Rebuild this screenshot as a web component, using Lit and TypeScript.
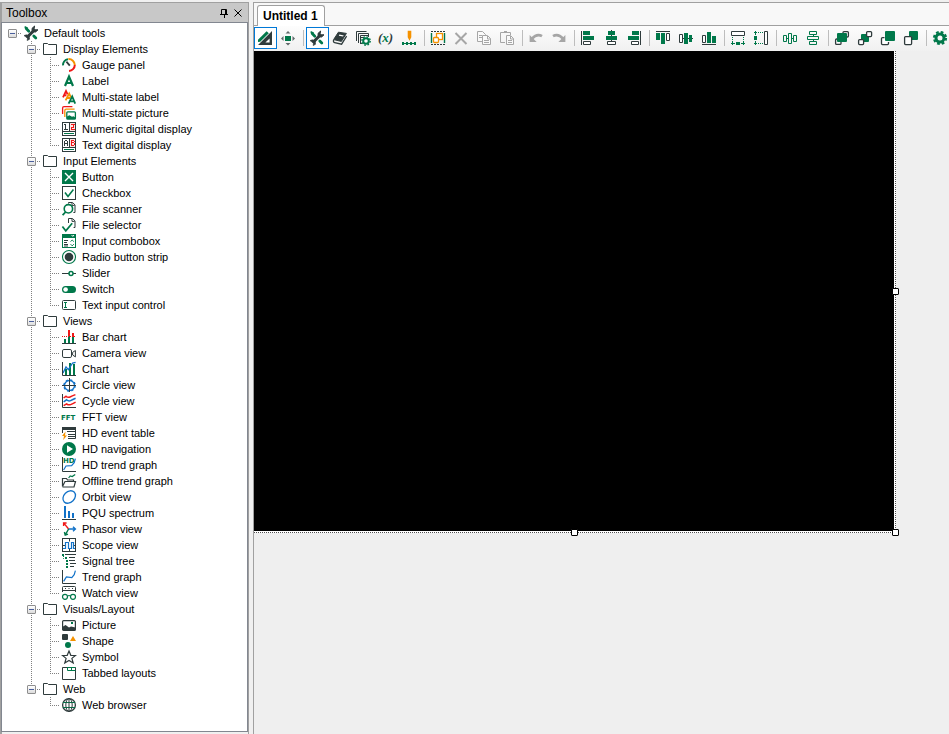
import { LitElement, html, css, svg, nothing } from "lit";
import type { SVGTemplateResult } from "lit";
import { customElement, property, state } from "lit/decorators.js";
import { classMap } from "lit/directives/class-map.js";

const G = "#00784a";
const D = "#2f3b3c";
const R = "#f01818";
const O = "#f59200";
const B = "#1272c8";
const A = "#a6a6a6";

/* All icons are drawn on a 16 x 16 grid. */
const icons: Record<string, SVGTemplateResult> = {
  tools: svg`<path d="M3.2 3.6L5.8 6.2M10.8 11l2 2" stroke="${G}" stroke-width="2.8" stroke-linecap="round"/><path d="M1.6 1.8l3 1.4" stroke="${G}" stroke-width="1.6"/>
    <path d="M4 12.4L11.4 5" stroke="${D}" stroke-width="3"/><path d="M11.6 1L9 3.4L9.2 6.6L12.6 7L15 4.8L12.4 4.8L11.2 3.6z" fill="${D}" stroke="${D}" stroke-linejoin="round"/>
    <path d="M1 10.6l2.4-.8l2.800 1.400l.4 3l-2.400 1.400l.2-2.200l-1.400-1.400z" fill="${D}" stroke="${D}" stroke-width=".6"/>`,
  folder: svg`<path d="M1.5 13.5v-11h4l1 1h8v10z" fill="#fff" stroke="${D}" stroke-linejoin="round"/>`,
  gauge: svg`<g fill="none" stroke-width="2"><path d="M2 8.4A6 6 0 0 1 7 2.2" stroke="${G}"/><path d="M7.4 2.1A6 6 0 0 1 13.8 8" stroke="${O}"/><path d="M13.8 8A6 6 0 0 1 8 13.9" stroke="${R}"/></g><path d="M5.4 4.6l3.4 4" stroke="${D}" stroke-width="1.8"/>`,
  label: svg`<path d="M4 13L8 3.5L12 13M5.4 10h5.2" fill="none" stroke="${G}" stroke-width="2.2"/>`,
  multilabel: svg`<g fill="none"><path d="M2 8.4L5 2l1.6 3.4M2.8 6.4h2.6" stroke="${R}" stroke-width="1.8"/><path d="M4.6 11.4L8.2 4.6l1.8 4M6 9h3" stroke="${O}" stroke-width="1.8"/><path d="M7.6 14.6L11.2 7.4l3 7.2M8.8 12.4h4.6" stroke="${G}" stroke-width="1.8"/></g>`,
  multipicture: svg`<g fill="none" stroke-width="1.3"><path d="M1.600 9V3q0-1.400 1.400-1.400h8.400" stroke="${R}"/><path d="M3.800 12V5.600q0-1.400 1.400-1.400h8.400" stroke="${O}"/><rect x="5.800" y="6.800" width="8.600" height="7.400" rx="1" fill="#fff" stroke="${G}"/></g><path d="M6 14v-2.400l2.400-1.400l2.600 1.600l1.400-.6l2 1.200V14z" fill="${G}"/>`,
  numeric: svg`<g shape-rendering="crispEdges"><rect x="1.5" y="1.5" width="13" height="13" fill="#fff" stroke="${D}"/><path d="M9 2h5v8H9z" fill="#ffe4e4"/><path d="M8.5 1v10M1 10.5h14" stroke="${D}"/><path d="M3 3.5h2M4.5 3v6M3 8.5h4" stroke="${D}"/><path d="M10 3.5h3.500M12.500 3v3M10 6h3M10.500 6v3M10 8.500h3.500" fill="none" stroke="${R}"/><path d="M3 12.5h10" stroke="${G}"/></g>`,
  textdisplay: svg`<g shape-rendering="crispEdges"><rect x="1.5" y="1.5" width="13" height="13" fill="#fff" stroke="${D}"/><path d="M9 2h5v8H9z" fill="#ffe4e4"/><path d="M8.5 1v10M1 10.5h14" stroke="${D}"/><path d="M3.5 9V4M6.500 9V4M4 3.500h2M3 6.5h4" fill="none" stroke="${D}"/><path d="M10.5 3v6M10 3.500h3M10 5.500h3M10 8.500h3M13.500 4v1M13.500 6v2" fill="none" stroke="${R}"/><path d="M3 12.5h10" stroke="${G}"/></g>`,
  button: svg`<rect x="1" y="1" width="14" height="14" fill="${G}"/><path d="M4 4l8 8M12 4l-8 8" stroke="#fff" stroke-width="1.4"/>`,
  checkbox: svg`<rect x="1.5" y="1.5" width="13" height="13" fill="#fff" stroke="${D}"/><path d="M4 7.6l3 3.8l5.4-6.8" fill="none" stroke="${G}" stroke-width="1.6"/>`,
  scanner: svg`<path d="M7.5 2.6V1.5h4l2.5 2.4v7.6h-1.6M11 1.8v2.6h2.6" fill="none" stroke="${D}"/><circle cx="7.4" cy="7.8" r="4.2" fill="none" stroke="${G}" stroke-width="1.6"/><path d="M4.6 11l-3 3.2" stroke="${G}" stroke-width="1.8"/>`,
  selector: svg`<path d="M7.5 6V1.5h4l2.5 2.4v6.6h-1.4M11 1.8v2.6h2.6" fill="none" stroke="${D}"/><path d="M1.4 9.4l3.4 4.4l6.4-7.6" fill="none" stroke="${G}" stroke-width="1.7"/>`,
  combobox: svg`<rect x="1.5" y="1.5" width="13" height="13" fill="#fff" stroke="${G}"/><path d="M1 1h14v4H1z" fill="${G}"/><path d="M10.6 2l1.2 1.4L13 2" fill="none" stroke="#fff"/><path d="M3 7.5h4M3 9.500h3M3 11.500h4M3 13h4" stroke="${D}"/><path d="M9.6 8.6l1.6-1.6l1.6 1.6M9.6 11.2l1.6 1.6l1.6-1.6" fill="none" stroke="${G}"/>`,
  radio: svg`<circle cx="8" cy="8" r="6.5" fill="#fff" stroke="${G}" stroke-width="1.1"/><circle cx="8" cy="8" r="4.3" fill="${D}"/>`,
  slider: svg`<path d="M1 8.5h7M12 8.5h3" stroke="${D}"/><circle cx="10" cy="8.5" r="2" fill="#fff" stroke="${G}" stroke-width="1.5"/>`,
  switch: svg`<rect x="1" y="5" width="14" height="7" rx="3.5" fill="${G}"/><circle cx="4.6" cy="8.5" r="2.3" fill="#fff"/>`,
  textinput: svg`<rect x="1.5" y="3.5" width="13" height="9" rx="1" fill="#fff" stroke="${D}"/><path d="M3 5.5h3M4.5 5v6M3 10.5h3" stroke="${G}"/>`,
  barchart: svg`<path d="M3 10h2v4H3zM7 6h2v8H7zM11 8h2v6h-2z" fill="${G}"/><path d="M7 1h2v6H7zM11 4h2v4h-2z" fill="${R}"/><path d="M1 7.500h14" stroke="${R}" stroke-dasharray="1 1"/><path d="M1 14.500h14" stroke="${D}"/>`,
  camera: svg`<rect x="1.500" y="4.500" width="9" height="8" rx="1.400" fill="#fff" stroke="${D}"/><path d="M11.600 7.400l2.800-1.900v6.400l-2.800-1.900z" fill="#fff" stroke="${D}"/>`,
  chart: svg`<path d="M8 2h2v12H8zM12 3h2v11h-2zM4 8h2v6H4z" fill="${G}"/><path d="M2 12L5 6l2.400 2.600L11.600 2l3-.6" fill="none" stroke="${B}" stroke-width="1.300"/><path d="M1.500 1v13.500H15" fill="none" stroke="${D}"/>`,
  circle: svg`<circle cx="8.500" cy="8.500" r="5" fill="none" stroke="${B}" stroke-width="1.300"/><circle cx="8.500" cy="8.500" r="5.600" fill="none" stroke="${B}" stroke-width="1.400" stroke-dasharray="2.200 2.200"/><path d="M8.500 1v14M1 8.500h14" stroke="${D}"/>`,
  cycle: svg`<g fill="none" stroke-width="1.500"><path d="M2.600 5l2.400-1.800q2 1.800 4 .8t5.400-2.400M2.600 12.600l3-1.800q2 1.600 4 .8t5-2.400" stroke="${R}"/><path d="M2.600 8.800l3-2q2 1.800 4 .8t5-2.400" stroke="${B}"/></g><path d="M1.500 1v13.500H15" fill="none" stroke="${D}"/>`,
  fft: svg`<text x="0" y="11" font-family="DejaVu Sans, sans-serif" font-weight="bold" font-size="7" fill="${G}">FFT</text>`,
  eventtable: svg`<path d="M1.500 8V2.500h13v11H7M6 6.500h8M7 9.500h7M7 11.500h7" fill="none" stroke="${D}"/><path d="M1 2h14v3H1z" fill="${D}"/><path d="M4.600 6.600L1 11h2l-.8 4L6 10.400H4z" fill="${O}"/>`,
  nav: svg`<circle cx="8" cy="8" r="7" fill="${G}"/><path d="M6 4.200v7.600L12 8z" fill="#fff"/>`,
  hdtrend: svg`<path d="M1.500 0v14.500H15" fill="none" stroke="${D}"/><path d="M2.600 13L5 9l5.600-.4l2.600-3l1.200-4" fill="none" stroke="${B}" stroke-width="1.200"/><text x="2" y="6" font-family="DejaVu Sans, sans-serif" font-weight="bold" font-size="7" fill="${G}">HD</text>`,
  offline: svg`<path d="M1.500 13.500V5.500h4l1 1.500h6v1.500M1.500 13.500L4 8.500h10.500l-1.500 5.500H1.500" fill="none" stroke="${D}" stroke-width="1.200"/><path d="M7.600 5l1.600-2l2 .6l3-2.200" fill="none" stroke="${G}" stroke-width="1.200"/>`,
  orbit: svg`<ellipse cx="8.200" cy="8" rx="7" ry="5.400" transform="rotate(-45 8.200 8)" fill="none" stroke="${B}" stroke-width="1.300"/>`,
  pqu: svg`<path d="M3 1h2v12H3zM7 6h2v7H7zM11 8h2v5h-2z" fill="${B}"/><path d="M1 14.500h14" stroke="${D}"/>`,
  phasor: svg`<g fill="none" stroke-width="1.400"><path d="M7.600 8L3 2.400M2.600 5V2h3" stroke="${R}"/><path d="M7.600 8h6M12 5.800L14.400 8L12 10.200" stroke="${B}"/><path d="M7.600 8l-3.200 5.600M3.400 11l.8 3.200l2.800-1" stroke="${G}"/></g>`,
  scope: svg`<rect x="1.500" y="1.500" width="13" height="13" fill="#fff" stroke="${D}"/><path d="M8.500 1.500v3M8.500 12v3M2 8.500h2M12 8.500h2" stroke="${D}"/><path d="M2 11.500h2.500v-6h3v6h3v-6h2v6h1.500" fill="none" stroke="${B}" stroke-width="1.200"/>`,
  signaltree: svg`<path d="M1 1h2v2H1zM4 4h2v2H4zM5 7h2v2H5zM5 10h2v2H5zM5 13h2v2H5z" fill="${G}"/><path d="M4 1.500h11M8 4.500h6M8 7.500h6M9 10.500h6M9 13.500h4" stroke="${D}"/><path d="M2.500 3v2.500H4" fill="none" stroke="${G}" stroke-dasharray="1 1"/>`,
  trend: svg`<path d="M1.500 1v13.500H15" fill="none" stroke="${D}"/><path d="M2.600 12.400L5.400 8l5.400.6l2.400-3l1.200-4" fill="none" stroke="${B}" stroke-width="1.200"/>`,
  watch: svg`<path d="M1.500 7V2.500q0-1 1-1h11q1 0 1 1V7M1 5.500h14M4 3.500h1M7.500 3.500h1M11 3.500h1" fill="none" stroke="${D}"/><circle cx="4" cy="11.800" r="2.500" fill="none" stroke="${G}" stroke-width="1.200"/><circle cx="12" cy="11.800" r="2.500" fill="none" stroke="${G}" stroke-width="1.200"/><path d="M6.500 11q1.500-1 3 0" fill="none" stroke="${G}"/>`,
  picture: svg`<rect x="1.600" y="3.600" width="12.800" height="9.800" rx="1" fill="#fff" stroke="${D}" stroke-width="1.200"/><path d="M2 13v-3.400L4.600 8L8 10.400l2-1l4.400 1V13z" fill="${D}"/><path d="M10 5h2v2h-2z" fill="${G}"/>`,
  shape: svg`<rect x="1" y="1" width="6" height="6" rx="1" fill="${D}"/><path d="M12 3l3 5H9z" fill="${O}"/><circle cx="7" cy="12" r="3" fill="${G}"/>`,
  symbol: svg`<path d="M8 2l1.800 4.300l4.700.2L10.900 9.400L12.200 14L8 11.400L3.800 14L5.100 9.400L1.500 6.500l4.700-.2z" fill="#fff" stroke="${D}" stroke-width="1.200"/>`,
  tabbed: svg`<path d="M1.500 2.500h13v12h-13z" fill="#fff" stroke="${D}"/><path d="M6.500 2v3.500h8M10.500 2.500v3M6 2.500h8.500" fill="none" stroke="${G}"/>`,
  globe: svg`<circle cx="8" cy="8" r="6.400" fill="#fff" stroke="${D}" stroke-width="1.300"/><path d="M2 5.500h12M2 10.500h12" stroke="${G}"/><path d="M8 1.500v13" stroke="${D}"/><ellipse cx="8" cy="8" rx="3.200" ry="6.400" fill="none" stroke="${D}"/>`,

  design: svg`<path d="M1 9.800L9.600 1.200l2.200 2L3.200 11.800L1 12z" fill="${G}"/><path fill-rule="evenodd" d="M15 1V15H1zM12.600 8.400v4.200H8.400z" fill="${D}"/>`,
  move: svg`<path d="M5 6h6v5H5z" fill="${G}"/><path d="M5.500 3.500L8 1l2.500 2.500zM5.500 13L8 15.500L10.500 13zM3.500 6L1 8.500L3.500 11zM12.500 6L15 8.500L12.500 11z" fill="${D}" opacity=".75"/>`,
  book: svg`<path d="M1.600 9.600L6.400 2.200l8 1.200l-5 8z" fill="${D}" stroke="${D}" stroke-linejoin="round"/><path d="M1.600 9.800q-.6 2.400 1 2.800l7 1.600l5-8" fill="none" stroke="${D}" stroke-width="1.300"/><path d="M7.400 4.600l4.400 .8l-.8 1.200l-4.200-.8z" fill="#fff"/>`,
  copygear: svg`<path d="M1.500 11V1.500h10M3.500 13V3.500h10V7M5.500 13.500v-8h8M6 7.500h3M5 13.500h2" fill="none" stroke="${D}"/><circle cx="11" cy="11" r="2.800" fill="#fff" stroke="${G}" stroke-width="2"/><circle cx="11" cy="11" r="4.200" fill="none" stroke="${G}" stroke-width="1.400" stroke-dasharray="1.650 1.650"/>`,
  fx: svg`<text x="0" y="12" font-family="Liberation Serif, serif" font-style="italic" font-weight="bold" font-size="13" fill="${D}">(<tspan fill="${G}">x</tspan>)</text>`,
  marker: svg`<path d="M7.500 1.500h2v5.500L8.500 9L7.500 7z" fill="${O}" stroke="${O}" stroke-width="1.600"/><path d="M1 13.500h14" stroke="${G}"/><path d="M1 12h2v3H1zM5 12h2v3H5zM9 12h2v3H9zM13 12h2v3h-2z" fill="${G}"/>`,
  group: svg`<path d="M1 1.500h14M1 14.500h14" stroke="${D}" stroke-dasharray="2 1"/><path d="M1.500 3v10M14.500 3v10" stroke="${G}" stroke-width="1.400"/><rect x="6.500" y="3.500" width="6" height="6" fill="#fff" stroke="${O}" stroke-width="1.300"/><rect x="3.500" y="7.500" width="5" height="5" rx="1" fill="#fff" stroke="${O}" stroke-width="1.300"/>`,
  delete: svg`<path d="M2.500 3l11 11M13.500 3l-11 11" stroke="${A}" stroke-width="2"/>`,
  copy: svg`<path d="M1.500 1.500h5l3 3v7h-8z" fill="#fafafa" stroke="${A}"/><path d="M3 5.500h3M3 7.500h3" stroke="${A}"/><path d="M6.500 5.500h5l3 3v6h-8z" fill="#fafafa" stroke="${A}"/><path d="M8 10.500h5M8 12.500h5M11.500 6v3h3" stroke="${A}" fill="none"/>`,
  paste: svg`<path d="M6 12.500H1.500v-10h10V5M4 2.500h5M5 1.500h3" fill="none" stroke="${A}"/><path d="M7.500 5.500h4l3 3v6h-7z" fill="#fafafa" stroke="${A}"/><path d="M9 10.500h4M9 12.500h4M11.500 6v3h3" stroke="${A}" fill="none"/>`,
  undo: svg`<path d="M4 8.600q5-5.600 10-2.400" fill="none" stroke="${A}" stroke-width="2.600"/><path d="M1.600 5v7h7z" fill="${A}"/>`,
  redo: svg`<path d="M12 8.600q-5-5.600-10-2.400" fill="none" stroke="${A}" stroke-width="2.600"/><path d="M14.400 5v7h-7z" fill="${A}"/>`,
  alignleft: svg`<path d="M1.500 1v14" stroke="${D}"/><path d="M3 1h7v4H3zM3 6h11v4H3z" fill="${G}"/><path d="M3.500 11.500h7v3h-7z" fill="#fff" stroke="${D}"/>`,
  aligncenter: svg`<path d="M8.500 0v15" stroke="${D}"/><path d="M5 1h7v4H5zM3 6h11v4H3z" fill="${G}"/><path d="M4.500 11.500h8v3h-8z" fill="#fff" stroke="${D}"/>`,
  alignright: svg`<path d="M14.500 1v14" stroke="${D}"/><path d="M6 1h7v4H6zM2 6h11v4H2z" fill="${G}"/><path d="M5.500 11.500h7v3h-7z" fill="#fff" stroke="${D}"/>`,
  aligntop: svg`<path d="M1 1.500h14" stroke="${D}"/><path d="M1 3h4v7H1zM6 3h4v11H6z" fill="${G}"/><path d="M11.500 3.500h3v7h-3z" fill="#fff" stroke="${D}"/>`,
  alignmiddle: svg`<path d="M1 8.500h14" stroke="${D}"/><path d="M6 3h4v11H6zM11 5h3v7h-3z" fill="${G}"/><path d="M1.500 4.500h3v8h-3z" fill="#fff" stroke="${D}"/>`,
  alignbottom: svg`<path d="M1 14.500h14" stroke="${D}"/><path d="M6 2h4v11H6zM11 6h4v7h-4z" fill="${G}"/><path d="M1.500 5.500h3v7h-3z" fill="#fff" stroke="${D}"/>`,
  samewidth: svg`<path d="M1.500 1.500h13v4h-13z" fill="#fff" stroke="${D}"/><path d="M2.500 7v5M13.500 7v5" stroke="${G}" stroke-dasharray="1 1"/><path d="M1 13.500h4M11 13.500h4M2.500 12v3M13.500 12v3" stroke="${G}"/><path d="M6 12h4v3H6z" fill="${G}"/>`,
  sameheight: svg`<path d="M11.500 1.500h3v13h-3z" fill="#fff" stroke="${D}"/><path d="M5 2.500h5M5 13.500h5" stroke="${G}" stroke-dasharray="1 1"/><path d="M2.500 1v4M2.500 11v4M1 2.500h3M1 13.500h3" stroke="${G}"/><path d="M1 6h3v4H1z" fill="${G}"/>`,
  spaceh: svg`<path d="M1.500 5.500h3v6h-3zM6.500 3.500h3v10h-3zM11.500 5.500h3v6h-3zM5 8.500h1M10 8.500h1" fill="none" stroke="${G}"/>`,
  spacev: svg`<path d="M4.500 1.500h7v3h-7zM2.500 6.500h11v3h-11zM4.500 11.500h7v3h-7zM8.500 5v1M8.500 10v1" fill="none" stroke="${G}"/>`,
  front: svg`<rect x="9" y="1.600" width="5.400" height="5.400" rx="1" fill="#fff" stroke="${D}" stroke-width="1.300"/><rect x="1.600" y="9" width="5.400" height="5.400" rx="1" fill="#fff" stroke="${D}" stroke-width="1.300"/><rect x="3" y="3" width="10" height="9" rx="1" fill="${G}"/>`,
  back: svg`<rect x="4" y="4" width="8" height="8" rx="1" fill="${G}"/><rect x="9.600" y="1.600" width="5" height="5" rx="1" fill="#fff" stroke="${D}" stroke-width="1.300"/><rect x="1.600" y="9.600" width="5" height="5" rx="1" fill="#fff" stroke="${D}" stroke-width="1.300"/>`,
  forward: svg`<path d="M4.500 7.600h-2q-1 0-1 1v5q0 1 1 1h5q1 0 1-1V12" fill="#fff" stroke="${D}" stroke-width="1.300"/><rect x="5" y="1" width="10" height="10" rx="1" fill="${G}"/>`,
  backward: svg`<rect x="6" y="1" width="9" height="9" rx="1" fill="${G}"/><rect x="1.600" y="6.600" width="7" height="8" rx="1" fill="#fff" stroke="${D}" stroke-width="1.300"/>`,
  gear: svg`<circle cx="8" cy="8" r="4" fill="none" stroke="${G}" stroke-width="3"/><circle cx="8" cy="8" r="6" fill="none" stroke="${G}" stroke-width="2.200" stroke-dasharray="2.700 2.010"/>`,
};

interface TreeNode {
  label: string;
  icon: string;
  children?: TreeNode[];
}

const n = (label: string, icon: string, children?: TreeNode[]): TreeNode => ({ label, icon, children });

const tree: TreeNode = n("Default tools", "tools", [
  n("Display Elements", "folder", [
    n("Gauge panel", "gauge"), n("Label", "label"), n("Multi-state label", "multilabel"),
    n("Multi-state picture", "multipicture"), n("Numeric digital display", "numeric"), n("Text digital display", "textdisplay"),
  ]),
  n("Input Elements", "folder", [
    n("Button", "button"), n("Checkbox", "checkbox"), n("File scanner", "scanner"), n("File selector", "selector"),
    n("Input combobox", "combobox"), n("Radio button strip", "radio"), n("Slider", "slider"), n("Switch", "switch"),
    n("Text input control", "textinput"),
  ]),
  n("Views", "folder", [
    n("Bar chart", "barchart"), n("Camera view", "camera"), n("Chart", "chart"), n("Circle view", "circle"),
    n("Cycle view", "cycle"), n("FFT view", "fft"), n("HD event table", "eventtable"), n("HD navigation", "nav"),
    n("HD trend graph", "hdtrend"), n("Offline trend graph", "offline"), n("Orbit view", "orbit"), n("PQU spectrum", "pqu"),
    n("Phasor view", "phasor"), n("Scope view", "scope"), n("Signal tree", "signaltree"), n("Trend graph", "trend"),
    n("Watch view", "watch"),
  ]),
  n("Visuals/Layout", "folder", [
    n("Picture", "picture"), n("Shape", "shape"), n("Symbol", "symbol"), n("Tabbed layouts", "tabbed"),
  ]),
  n("Web", "folder", [n("Web browser", "globe")]),
]);

const icon = (name: string) => html`<svg class="icon" viewBox="0 0 16 16" aria-hidden="true">${icons[name]}</svg>`;

@customElement("tool-tree")
export class ToolTree extends LitElement {
  @state() private closed = new Set<string>();

  static styles = css`
    :host { display: block; }
    ul { list-style: none; margin: 0; padding: 0; }
    .row { display: flex; align-items: center; height: 16px; }
    .guide {
      flex: none; display: grid; place-items: center; width: 19px; height: 16px;
      --v: repeating-linear-gradient(180deg, #808080 0 1px, transparent 1px 2px);
      --h: repeating-linear-gradient(90deg, #808080 0 1px, transparent 1px 2px);
      background-repeat: no-repeat;
    }
    .line { background-image: var(--v); background-position: 9px 0; background-size: 1px 16px; }
    .tee, .elbow, .root { background-image: var(--h), var(--v); background-position: 9px 8px, 9px 0; }
    .tee { background-size: 10px 1px, 1px 16px; }
    .elbow { background-size: 10px 1px, 1px 9px; }
    .root { background-size: 10px 1px, 0 0; }
    .toggle {
      width: 9px; height: 9px; padding: 0; border: 1px solid #8e8e8e; border-radius: 1px;
      display: grid; place-items: center; background: linear-gradient(#fff, #dcdcdc);
    }
    .toggle svg { display: block; width: 7px; height: 7px; }
    .icon { flex: none; width: 16px; height: 16px; margin: 0 5px 0 1px; }
    .label { white-space: nowrap; }
  `;

  private flip(label: string) {
    const next = new Set(this.closed);
    if (!next.delete(label)) next.add(label);
    this.closed = next;
  }

  private node(item: TreeNode, depth: number, last: boolean, parentLast: boolean): unknown {
    const open = !this.closed.has(item.label);
    const own = depth === 0 ? "root" : last ? "elbow" : "tee";
    return html`<li role="treeitem" aria-expanded=${item.children ? String(open) : nothing}>
      <div class="row">
        ${depth > 0 ? html`<span class="guide"></span>` : nothing}
        ${depth > 1 ? html`<span class=${classMap({ guide: true, line: !parentLast })}></span>` : nothing}
        <span class="guide ${own}">
          ${item.children
            ? html`<button class="toggle" aria-label="${open ? "Collapse" : "Expand"} ${item.label}" @click=${() => this.flip(item.label)}>
                <svg viewBox="0 0 7 7"><path d=${open ? "M1 3.5h5" : "M1 3.5h5M3.5 1v5"} stroke="#4a5f9c" fill="none" /></svg>
              </button>`
            : nothing}
        </span>
        ${icon(item.icon)}<span class="label">${item.label}</span>
      </div>
      ${item.children && open
        ? html`<ul role="group">${item.children.map((c, i) => this.node(c, depth + 1, i === item.children!.length - 1, last))}</ul>`
        : nothing}
    </li>`;
  }

  render() {
    return html`<ul role="tree" aria-label="Toolbox">${this.node(tree, 0, true, true)}</ul>`;
  }
}

const groups: string[][] = [
  ["design", "move"],
  ["tools", "book", "copygear", "fx", "marker"],
  ["group", "delete", "copy", "paste"],
  ["undo", "redo"],
  ["alignleft", "aligncenter", "alignright"],
  ["aligntop", "alignmiddle", "alignbottom"],
  ["samewidth", "sameheight"],
  ["spaceh", "spacev"],
  ["front", "back", "forward", "backward"],
  ["gear"],
];

@customElement("tool-bar")
export class ToolBar extends LitElement {
  @property({ attribute: false }) active = new Set(["design", "tools"]);

  static styles = css`
    :host { display: block; overflow: hidden; }
    .bar { display: flex; padding: 1px 0 2px; background: linear-gradient(#fdfdfd, #f0f0f0); }
    .group { display: flex; flex: none; }
    .group + .group::before { content: ""; width: 1px; margin: 3px 2px 3px 3px; background: #bdbdbd; }
    button { flex: none; width: 23px; height: 22px; padding: 2px 3px 2px 2px; border: 1px solid transparent; background: none; }
    button.on { border-color: #0078d7; background: #fff; }
    .icon { display: block; width: 16px; height: 16px; }
  `;

  render() {
    return html`<div class="bar" role="toolbar" aria-label="Layout tools">
      ${groups.map((g) => html`<div class="group">
        ${g.map((name) => html`<button class=${classMap({ on: this.active.has(name) })} aria-label=${name}>${icon(name)}</button>`)}
      </div>`)}
    </div>`;
  }
}

@customElement("app-root")
export class AppRoot extends LitElement {
  static styles = css`
    :host {
      display: flex; gap: 4px; box-sizing: border-box; min-height: 100vh; padding-top: 2px;
      background: #f0f0f0; color: #000; font: 11px/16px "Liberation Sans", Arial, sans-serif;
    }
    .side {
      flex: none; display: flex; flex-direction: column; box-sizing: border-box; width: 249px; padding-bottom: 2px;
      border: solid #a0a0a0; border-width: 1px 1px 0 2px;
    }
    .head { display: flex; align-items: center; height: 19px; padding: 0 3px 0 4px; background: #c8c8c8; }
    .title { flex: 1; margin: 0; font-size: 12px; font-weight: normal; }
    .head button { width: 14px; height: 16px; padding: 0; border: 0; background: none; display: grid; place-items: center; }
    .head svg { display: block; width: 10px; height: 10px; }
    .list { flex: 1; padding: 2px 0; border: 1px solid #828790; border-left-width: 0; background: #fff; box-shadow: -1px 0 #828790; padding-left: 1px; }
    .main { flex: 1; min-width: 0; display: flex; flex-direction: column; border: solid #a0a0a0; border-width: 1px 0 0 1px; }
    .tabs { display: flex; padding: 2px 3px 0; background: #f8f8f8; border-bottom: 1px solid #a0a0a0; }
    .tab {
      height: 21px; margin-bottom: -1px; padding: 0 6px 0 5px; border: 1px solid #a0a0a0; border-bottom: 0; border-radius: 3px 3px 0 0;
      background: #fff; font: bold 12px/20px "Liberation Sans", Arial, sans-serif; color: #000;
    }
    .work { flex: 1; overflow: hidden; background: #efefef; }
    .page { position: relative; width: 640px; height: 480px; background: #000; }
    .frame { position: absolute; inset: 0 -2px -2px 0; width: 642px; height: 482px; }
    .handle { position: absolute; box-sizing: border-box; width: 7px; height: 7px; border: 1px solid #000; border-radius: 1px; background: #fff; }
    .e { right: -5px; top: 237px; }
    .s { bottom: -5px; left: 317px; }
    .se { right: -5px; bottom: -5px; }
  `;

  render() {
    return html`
      <aside class="side">
        <header class="head">
          <h2 class="title">Toolbox</h2>
          <button aria-label="Pin"><svg viewBox="0 0 10 10"><path d="M2.500 6V1.500h5V6M1 6.500h8M5.500 7v3M6.500 1v5" fill="none" stroke="#000" /></svg></button>
          <button aria-label="Close"><svg viewBox="0 0 10 10"><path d="M1.500 1.500l7 7M8.500 1.500l-7 7" stroke="#000" /></svg></button>
        </header>
        <div class="list"><tool-tree></tool-tree></div>
      </aside>
      <main class="main">
        <div class="tabs" role="tablist"><button class="tab" role="tab" aria-selected="true">Untitled 1</button></div>
        <tool-bar></tool-bar>
        <div class="work">
          <div class="page">
            <svg class="frame" viewBox="0 0 642 482" aria-hidden="true">
              <path d="M640.500 0v482M0 480.500h642" stroke="#fff" />
              <path d="M641.500 0v482M0 481.500h642" stroke="#fff" />
              <path d="M641.500 0v482M0 481.500h642" stroke="#505050" stroke-dasharray="1 1" />
            </svg>
            <span class="handle e"></span><span class="handle s"></span><span class="handle se"></span>
          </div>
        </div>
      </main>
    `;
  }
}
